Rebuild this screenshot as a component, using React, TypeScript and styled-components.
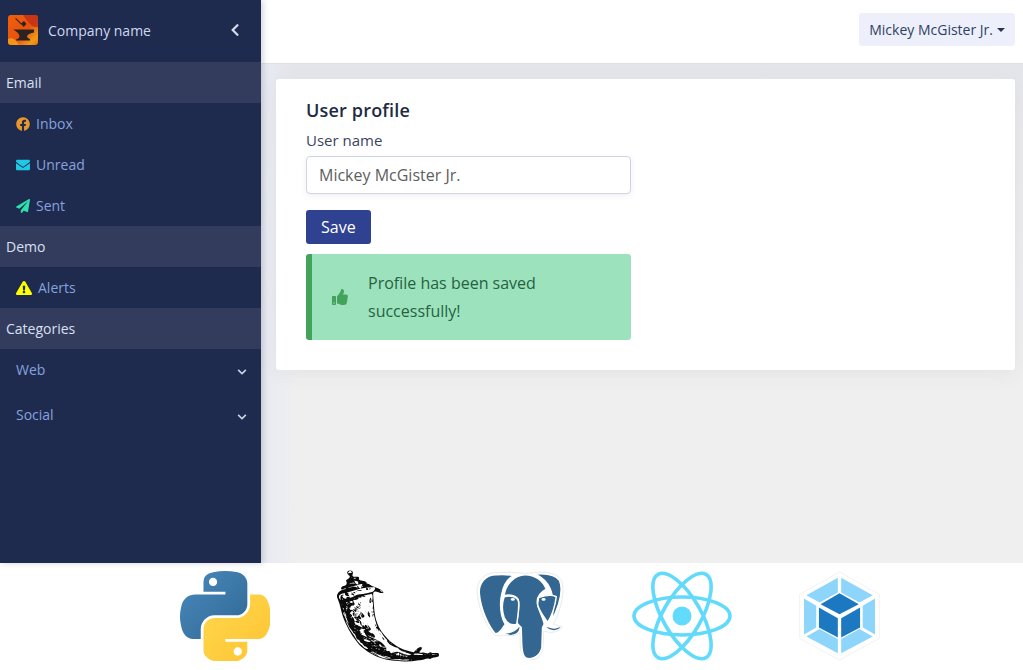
import styled, { createGlobalStyle } from 'styled-components';
import { FaChevronDown, FaChevronLeft, FaEnvelope, FaExclamationTriangle, FaFacebook, FaPaperPlane, FaThumbsUp } from 'react-icons/fa';
import { SiFlask } from 'react-icons/si';

const GlobalStyle = createGlobalStyle`
  html, body {
    margin: 0;
    padding: 0;
    height: 100%;
    overflow: hidden;
    background: #fff;
    font-family: 'Open Sans', 'Liberation Sans', sans-serif;
  }
  * {
    box-sizing: border-box;
  }
`;

const Page = styled.div`
  width: 1023px;
  height: 670px;
  display: flex;
  flex-direction: column;
`;

const Shell = styled.div`
  height: 563px;
  display: flex;
`;

const Sidebar = styled.aside`
  width: 261px;
  flex-shrink: 0;
  background: #1f2a4f;
  box-shadow: 2px 0 6px rgba(30, 40, 70, 0.2);
  z-index: 2;
`;

const Brand = styled.div`
  height: 62px;
  display: flex;
  align-items: center;
  padding: 0 19px 2px 8px;
  color: #ced9f0;
  font-size: 14px;
`;

const BrandName = styled.span`
  margin-left: 10px;
  flex: 1;
`;

const Collapse = styled(FaChevronLeft)`
  color: #d5dbe8;
  font-size: 14px;
`;

const SectionTitle = styled.div`
  height: 41px;
  display: flex;
  align-items: center;
  padding-left: 6px;
  background: #333c5c;
  color: #d8e0f2;
  font-size: 14px;
`;

const NavItem = styled.a<{ $tall?: boolean }>`
  height: ${(p) => (p.$tall ? 45 : 41)}px;
  display: flex;
  align-items: center;
  padding: 0 14px 0 16px;
  color: #85a3dc;
  font-size: 14px;
`;

const NavIcon = styled.span<{ $color: string; $size?: number }>`
  display: flex;
  margin-right: 6px;
  color: ${(p) => p.$color};
  font-size: ${(p) => p.$size ?? 14}px;
`;

const NavLabel = styled.span<{ $raised?: boolean }>`
  flex: 1;
  padding-bottom: ${(p) => (p.$raised ? 4 : 0)}px;
`;

const Expand = styled(FaChevronDown)`
  color: #ccd3e2;
  font-size: 10px;
`;

const Main = styled.div`
  flex: 1;
  display: flex;
  flex-direction: column;
  min-width: 0;
`;

const Topbar = styled.header`
  height: 64px;
  flex-shrink: 0;
  display: flex;
  justify-content: flex-end;
  padding: 13px 8px 0 0;
  background: #fff;
  border-bottom: 1px solid #dfe0e4;
`;

const UserButton = styled.button`
  height: 33px;
  padding: 0 10px;
  border: 0;
  border-radius: 3px;
  background: #edf0fb;
  color: #2f3f63;
  font: 14px 'Open Sans', sans-serif;
  display: flex;
  align-items: center;
`;

const Caret = styled.span`
  margin-left: 4px;
  border-top: 4px solid #2a3350;
  border-left: 4px solid transparent;
  border-right: 4px solid transparent;
`;

const Content = styled.main`
  flex: 1;
  padding: 15px 8px 0 15px;
  background:
    linear-gradient(to right, #e8eaf3, rgba(239, 239, 239, 0) 36px),
    linear-gradient(to bottom, #e4e5ea, #e9e9ec 60px, #efefef 320px);
`;

const Card = styled.section`
  height: 291px;
  padding: 19px 30px 0;
  border-radius: 3px;
  background: #fff;
  box-shadow: 0 4px 20px rgba(60, 70, 100, 0.06);
`;

const CardTitle = styled.h2`
  margin: 0;
  color: #1f2a44;
  font-size: 18px;
  font-weight: 600;
  line-height: 25px;
  letter-spacing: 0.18px;
`;

const FieldLabel = styled.label`
  display: block;
  margin-top: 7px;
  color: #3a4560;
  font-size: 15px;
  line-height: 20px;
`;

const NameInput = styled.input`
  display: block;
  width: 325px;
  height: 38px;
  margin-top: 6px;
  padding: 0 12px;
  border: 1px solid #cfd3e3;
  border-radius: 4px;
  box-shadow: 0 2px 6px rgba(60, 70, 120, 0.08);
  color: #5e5e5e;
  font: 16px 'Open Sans', sans-serif;
`;

const SaveButton = styled.button`
  display: block;
  height: 34px;
  margin-top: 16px;
  padding: 0 15px;
  border: 0;
  border-radius: 3px;
  background: #2f4291;
  color: #fff;
  font: 16px 'Open Sans', sans-serif;
`;

const Alert = styled.div`
  width: 325px;
  height: 86px;
  margin-top: 10px;
  display: flex;
  align-items: center;
  padding-left: 20px;
  border-left: 6px solid #43a35a;
  border-radius: 3px;
  background: #9ce3bd;
  color: #27613f;
  font-size: 16px;
  line-height: 28px;
`;

const AlertIcon = styled(FaThumbsUp)`
  flex-shrink: 0;
  margin-right: 20px;
  color: #43a35a;
  font-size: 16px;
`;

const LogoStrip = styled.footer`
  height: 107px;
  display: flex;
  align-items: center;
  padding: 0 0 1px 180px;
  background: #fff;
`;

const LogoSlot = styled.div<{ $width: number }>`
  width: ${(p) => p.$width}px;
  display: flex;
`;

const FlaskLogo = styled(SiFlask)`
  color: #0b0b0b;
  font-size: 102px;
`;

const Anvil = () => (
  <svg width="30" height="30" viewBox="0 0 30 30" aria-hidden="true">
    <defs>
      <linearGradient id="forge" x1="0" y1="0" x2="1" y2="1">
        <stop offset="0" stopColor="#f0600a" />
        <stop offset="0.55" stopColor="#e8520e" />
        <stop offset="0.85" stopColor="#f39a16" />
        <stop offset="1" stopColor="#ee6f0d" />
      </linearGradient>
    </defs>
    <rect width="30" height="30" rx="3" fill="url(#forge)" />
    <path d="M15 0h12a3 3 0 0 1 3 3v9c-5 1-9-3-15-12z" fill="#b92a1a" opacity="0.7" />
    <path d="M0 24c4-2 8 0 11 6H3a3 3 0 0 1-3-3z" fill="#f5a51c" opacity="0.8" />
    <path d="M8 3l6 6-.8.8-6-6z" fill="#2b2320" />
    <path d="M13 8.500l3-2.500 2.500 3-3 3z" fill="#2b2320" />
    <path d="M5 14.500h21v3c-3 .5-6 1.500-7 3.500 0 1.500 1.500 2.500 3 3v1.500H8V24.500c2-.5 3.500-1.500 3.500-3.500-.5-3-3.500-5-6.500-6.500z" fill="#2b2320" />
  </svg>
);

const PythonLogo = () => (
  <svg width="90" height="90" viewBox="0 0 110 110" aria-hidden="true">
    <defs>
      <linearGradient id="pyBlue" x1="0" y1="0" x2="1" y2="1">
        <stop offset="0" stopColor="#4a8abc" />
        <stop offset="1" stopColor="#2f6795" />
      </linearGradient>
      <linearGradient id="pyYellow" x1="0" y1="0" x2="1" y2="1">
        <stop offset="0" stopColor="#ffd84f" />
        <stop offset="1" stopColor="#fec331" />
      </linearGradient>
    </defs>
    <path
      fill="url(#pyBlue)"
      d="M54.919 0.001c-4.584 .021-8.961 .412-12.813 1.094C30.76 3.099 28.7 7.295 28.7 15.032v10.219h26.813v3.406H18.638c-7.793 0-14.616 4.684-16.75 13.594-2.462 10.213-2.571 16.586 0 27.25 1.906 7.938 6.458 13.594 14.25 13.594h9.219V70.843c0-8.85 7.657-16.656 16.75-16.656h26.781c7.454 0 13.406-6.138 13.406-13.625V15.032c0-7.266-6.13-12.725-13.406-13.937C64.282 .328 59.502-.02 54.919 .001zM40.419 8.22c2.77 0 5.031 2.299 5.031 5.125 0 2.816-2.262 5.094-5.031 5.094-2.78 0-5.031-2.277-5.031-5.094 0-2.826 2.252-5.125 5.031-5.125z"
    />
    <path
      fill="url(#pyYellow)"
      d="M85.638 28.657v11.906c0 9.231-7.826 17-16.75 17H42.106c-7.336 0-13.406 6.278-13.406 13.625v25.531c0 7.266 6.319 11.54 13.406 13.625 8.487 2.496 16.626 2.947 26.781 0 6.75-1.954 13.406-5.888 13.406-13.625V86.499H55.513v-3.406h40.187c7.793 0 10.696-5.435 13.406-13.594 2.799-8.399 2.68-16.476 0-27.25-1.926-7.757-5.604-13.594-13.406-13.594zM70.575 93.313c2.78 0 5.031 2.277 5.031 5.094 0 2.826-2.252 5.125-5.031 5.125-2.77 0-5.031-2.299-5.031-5.125 0-2.816 2.262-5.094 5.031-5.094z"
    />
  </svg>
);

const PostgresLogo = () => (
  <svg width="91" height="92" viewBox="45 28 272 275" aria-hidden="true">
    <path
      d="M112 36C70 34 46 66 52 102c4 43 28 98 53 122 13 4 23-4 33 0 17 2 32-2 42-9v40c2 30 25 46 45 40 20-7 25-30 25-85 20 8 45 5 56-12l-26-8c25-50 35-105 23-132-13-23-53-26-81-22l-27 2c-25-2-55-4-83-2z"
      fill="#fff"
      stroke="#e0e0e0"
      strokeWidth="2"
    />
    <g fill="#336791" stroke="#fff" strokeWidth="4.500" strokeLinejoin="round">
      <path d="M112 42C75 40 55 70 58 100c4 45 27 95 47 118 13 4 23-18 31-28-14-20-18-60-11-90 5-25 15-45 35-55-15-3-32-5-48-3z" />
      <path d="M225 40c25-2 60 0 73 20 10 25 2 70-26 125 10-35 8-75-2-100-8-20-25-35-45-45z" />
      <path d="M195 42c30 0 53 18 63 43-18 10-30 25-26 45 4 20 18 45 20 60l-5 10-2 60c-5 25-30 38-48 31-15-8-12-51-14-91-5-5-11-10-13-15 2-25 8-45 5-65-3-15-25-20-43-15 3-30 28-63 63-63z" />
      <path d="M132 108c18-6 40 0 43 14 3 23-3 48-5 68-15 5-30-2-38-20-7-20-6-45 0-62z" />
      <path d="M235 110c15-5 40-10 53-2-3 22-13 57-26 77-12-20-27-35-30-55z" />
    </g>
    <g fill="#336791">
      <path d="M135 218c20 0 35-8 43-20 0 17-13 24-28 24z" />
      <path d="M258 198c17 7 32 7 42 0-5 12-30 14-42 0z" />
    </g>
    <ellipse cx="158" cy="116" rx="6" ry="4" fill="#fff" />
    <ellipse cx="250" cy="116" rx="6" ry="4" fill="#fff" />
  </svg>
);

const ReactLogo = () => (
  <svg width="102" height="90" viewBox="0 0 102 90" aria-hidden="true">
    <g fill="none" stroke="#61dafb" strokeWidth="3.6">
      <ellipse cx="51" cy="45" rx="48" ry="19" />
      <ellipse cx="51" cy="45" rx="48" ry="19" transform="rotate(60 51 45)" />
      <ellipse cx="51" cy="45" rx="48" ry="19" transform="rotate(120 51 45)" />
    </g>
    <circle cx="51" cy="45" r="9.500" fill="#61dafb" />
  </svg>
);

const WebpackLogo = () => (
  <svg width="83" height="92" viewBox="535 33 250 275" aria-hidden="true">
    <path d="M660 38l120 67v133l-120 65-120-65V105z" fill="#fff" stroke="#e4e4e4" strokeWidth="1.500" />
    <g fill="#8ed5fb">
      <path d="M655 55v45l-55 30-40-22z" />
      <path d="M665 55v45l55 30 40-22z" />
      <path d="M553 118l37 22v65l-37 21z" />
      <path d="M767 118l-37 22v65l37 21z" />
      <path d="M655 283v-43l-55-30-40 22z" />
      <path d="M665 283v-43l55-30 40 22z" />
    </g>
    <g fill="#1c78c0">
      <path d="M660 102l58 33-58 30-57-30z" />
      <path d="M598 145l57 32v58l-57-30z" />
      <path d="M722 145l-57 32v58l57-30z" />
    </g>
  </svg>
);

export default function App() {
  return (
    <Page>
      <GlobalStyle />
      <Shell>
        <Sidebar>
          <Brand>
            <Anvil />
            <BrandName>Company name</BrandName>
            <Collapse />
          </Brand>
          <SectionTitle>Email</SectionTitle>
          <NavItem>
            <NavIcon $color="#e8962e">
              <FaFacebook />
            </NavIcon>
            <NavLabel>Inbox</NavLabel>
          </NavItem>
          <NavItem>
            <NavIcon $color="#1fc8e3">
              <FaEnvelope />
            </NavIcon>
            <NavLabel>Unread</NavLabel>
          </NavItem>
          <NavItem>
            <NavIcon $color="#2ee0ab">
              <FaPaperPlane />
            </NavIcon>
            <NavLabel>Sent</NavLabel>
          </NavItem>
          <SectionTitle>Demo</SectionTitle>
          <NavItem>
            <NavIcon $color="#ffff00" $size={16}>
              <FaExclamationTriangle />
            </NavIcon>
            <NavLabel>Alerts</NavLabel>
          </NavItem>
          <SectionTitle>Categories</SectionTitle>
          <NavItem $tall>
            <NavLabel $raised>Web</NavLabel>
            <Expand />
          </NavItem>
          <NavItem $tall>
            <NavLabel $raised>Social</NavLabel>
            <Expand />
          </NavItem>
        </Sidebar>
        <Main>
          <Topbar>
            <UserButton>
              Mickey McGister Jr.
              <Caret />
            </UserButton>
          </Topbar>
          <Content>
            <Card>
              <CardTitle>User profile</CardTitle>
              <FieldLabel>User name</FieldLabel>
              <NameInput defaultValue="Mickey McGister Jr." />
              <SaveButton>Save</SaveButton>
              <Alert>
                <AlertIcon />
                <span>Profile has been saved successfully!</span>
              </Alert>
            </Card>
          </Content>
        </Main>
      </Shell>
      <LogoStrip>
        <LogoSlot $width={157}>
          <PythonLogo />
        </LogoSlot>
        <LogoSlot $width={138}>
          <FlaskLogo />
        </LogoSlot>
        <LogoSlot $width={156}>
          <PostgresLogo />
        </LogoSlot>
        <LogoSlot $width={167}>
          <ReactLogo />
        </LogoSlot>
        <LogoSlot $width={83}>
          <WebpackLogo />
        </LogoSlot>
      </LogoStrip>
    </Page>
  );
}
